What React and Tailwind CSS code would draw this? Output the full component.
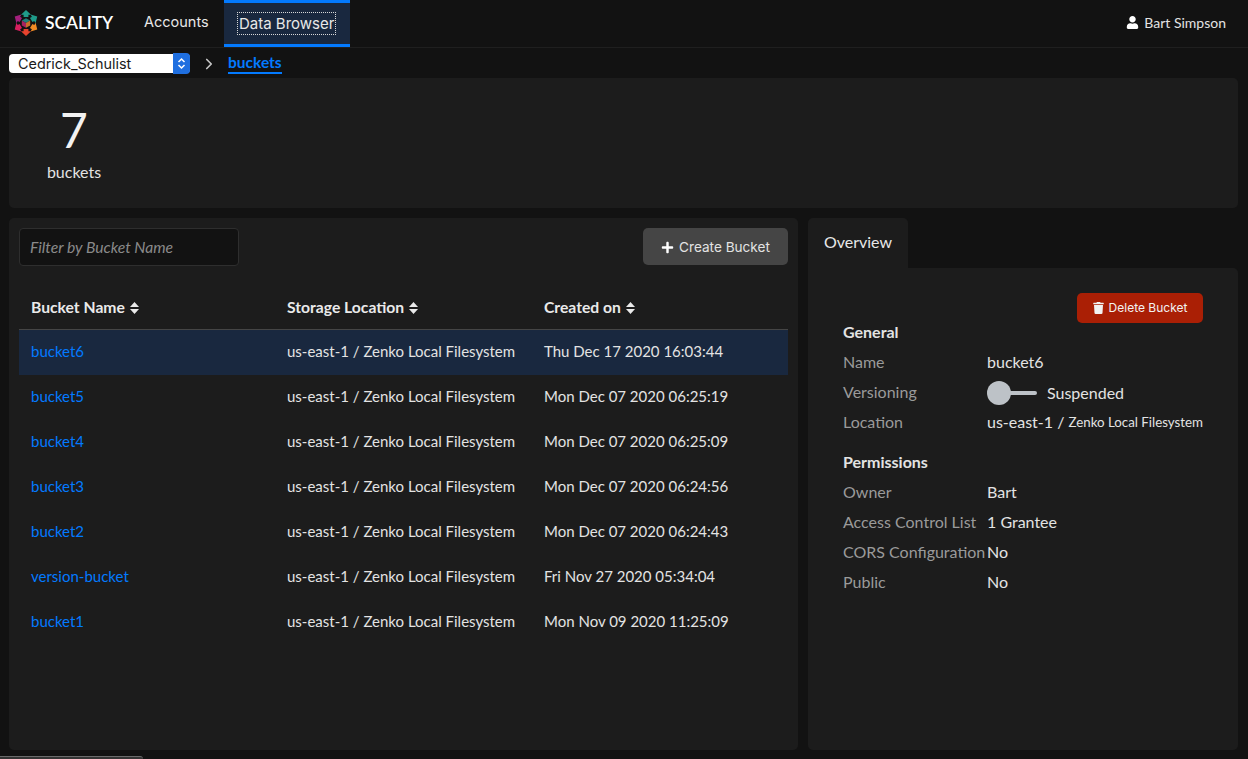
import { ChevronRight } from 'lucide-react'
import { FaPlus, FaTrash, FaUser } from 'react-icons/fa'

const BUCKETS = [
  { name: 'bucket6', created: 'Thu Dec 17 2020 16:03:44', selected: true },
  { name: 'bucket5', created: 'Mon Dec 07 2020 06:25:19' },
  { name: 'bucket4', created: 'Mon Dec 07 2020 06:25:09' },
  { name: 'bucket3', created: 'Mon Dec 07 2020 06:24:56' },
  { name: 'bucket2', created: 'Mon Dec 07 2020 06:24:43' },
  { name: 'version-bucket', created: 'Fri Nov 27 2020 05:34:04' },
  { name: 'bucket1', created: 'Mon Nov 09 2020 11:25:09' },
]

const ARROWS = [
  { angle: 0, color: '#1f9c8a' },
  { angle: 60, color: '#1f9c8a' },
  { angle: 120, color: '#f08a24' },
  { angle: 180, color: '#e8432e' },
  { angle: 240, color: '#d81f5f' },
  { angle: 300, color: '#a3207c' },
]

function Logo() {
  return (
    <svg width="26" height="26" viewBox="-13 -13 26 26" className="shrink-0">
      {ARROWS.map(a => (
        <g key={a.angle} transform={`rotate(${a.angle})`}>
          <path d="M0 -13 L5 -8.2 L2.4 -8.2 L2.4 -6 L-2.4 -6 L-2.4 -8.2 L-5 -8.2 Z" fill={a.color} />
        </g>
      ))}
      <path d="M0 -4.8 L4.2 -2.4 L0 0 L-4.2 -2.4 Z" fill="#1f7f78" />
      <path d="M4.2 -2.4 L4.2 2.4 L0 4.8 L0 0 Z" fill="#c9702a" />
      <path d="M-4.2 -2.4 L0 0 L0 4.8 L-4.2 2.4 Z" fill="#a8235f" />
    </svg>
  )
}

function SortHeader({ label }) {
  return (
    <div className="flex items-center gap-[5px] text-[15.7px] font-bold text-[#eaeaea]">
      {label}
      <svg width="9" height="12" viewBox="0 0 9 12" fill="currentColor" className="shrink-0">
        <path d="M4.5 0 L9 5 L0 5 Z" />
        <path d="M0 7 L9 7 L4.5 12 Z" />
      </svg>
    </div>
  )
}

function InfoRow({ label, children }) {
  return (
    <div className="flex h-[30px] items-center pb-[2px]">
      <div className="w-[144px] shrink-0 whitespace-nowrap text-[#9a9a9a]">{label}</div>
      <div className="flex items-center whitespace-nowrap text-[#e3e3e3]">{children}</div>
    </div>
  )
}

export default function App() {
  return (
    <div className="relative flex h-[759px] w-[1248px] flex-col overflow-hidden bg-[#121212] font-['Lato',sans-serif] text-[15px] text-[#eaeaea]">

      {/* Navbar */}
      <header className="flex h-[48px] shrink-0 items-stretch border-b border-[#1f1f1f] pl-[13px] pr-[22px]">
        <div className="flex w-[100px] items-center gap-[6px] pb-[1px]">
          <Logo />
          <span className="font-['Lato',sans-serif] text-[17.5px] font-semibold tracking-[-0.1px] text-white">SCALITY</span>
        </div>
        <div className="ml-[31px] flex items-center pb-[3px] font-['Inter',sans-serif] text-[14.5px] text-[#e8e8e8]">Accounts</div>
        <div className="ml-[15px] flex h-[47px] w-[126px] items-center justify-center border-y-[3px] border-[#037aff] bg-[#19283f] font-['Inter',sans-serif] text-[15px] text-[#e8e8e8]">
          <span className="border border-dotted border-[#d8d8d8] px-px leading-[21px]">Data Browser</span>
        </div>
        <div className="ml-auto flex items-center gap-[5px] pb-[2px] text-[14px] text-[#e3e3e3]">
          <FaUser className="h-[13px] w-[13px] text-white" />
          Bart Simpson
        </div>
      </header>

      {/* Breadcrumb */}
      <div className="flex h-[30px] shrink-0 items-center pl-[9px] pt-[1px]">
        <div className="flex h-[19px] w-[181px] items-center rounded-[4px] bg-white pl-[9px] font-['Inter',sans-serif] text-[14.4px] text-[#1a1a1a]">
          <span className="flex-1">Cedrick_Schulist</span>
          <span className="flex h-[21px] w-[17px] flex-col items-center justify-center rounded-r-[4px] bg-[#1f6fe0] text-white">
            <svg width="9" height="13" viewBox="0 0 9 13" fill="none" stroke="currentColor" strokeWidth="1.5">
              <path d="M1.5 5 L4.5 2 L7.5 5" />
              <path d="M1.5 8 L4.5 11 L7.5 8" />
            </svg>
          </span>
        </div>
        <ChevronRight className="ml-[10px] h-[18px] w-[18px] text-[#c8c8c8]" strokeWidth={2.2} />
        <span className="ml-[10px] mb-[1px] border-b-2 border-[#037aff] text-[15.5px] font-bold leading-[20px] text-[#037aff]">buckets</span>
      </div>

      {/* Summary */}
      <section className="ml-[9px] mr-[10px] flex h-[130px] shrink-0 flex-col rounded-[5px] bg-[#1c1c1c] pl-[38px]">
        <div className="w-[54px] pt-[22px] text-center">
          <div className="flex justify-center text-[48px] font-normal leading-[60px] text-[#f2f2f2]">7</div>
          <div className="mt-[2px] -mx-2 text-center text-[16px] leading-[20px] text-[#e3e3e3]">buckets</div>
        </div>
      </section>

      <div className="ml-[9px] mr-[10px] mt-[10px] flex h-[532px] shrink-0 gap-[10px]">

        {/* Bucket list */}
        <section className="flex w-[789px] shrink-0 flex-col rounded-[5px] bg-[#1c1c1c] px-[10px] pt-[10px]">
          <div className="flex items-start justify-between">
            <div className="flex h-[38px] w-[220px] items-center rounded-[4px] border border-[#2e2e2e] bg-[#121212] pl-[10px] pt-px text-[15.7px] italic text-[#8a8a8a]">
              Filter by Bucket Name
            </div>
            <button className="flex h-[37px] w-[145px] items-center justify-center gap-[5px] rounded-[5px] bg-[#454545] pt-px font-['Inter',sans-serif] text-[13.6px] text-[#e3e3e3]">
              <FaPlus className="h-[13px] w-[13px] text-white" />
              Create Bucket
            </button>
          </div>

          <div className="mt-[19px] flex h-[45px] items-center border-b border-[#454545] pt-[2px]">
            <div className="w-[256px] pl-[12px]"><SortHeader label="Bucket Name" /></div>
            <div className="w-[257px] pl-[12px]"><SortHeader label="Storage Location" /></div>
            <div className="pl-[12px]"><SortHeader label="Created on" /></div>
          </div>

          {BUCKETS.map(b => (
            <div key={b.name} className={`flex h-[45px] items-center pb-[2px] ${b.selected ? 'bg-[#19283f]' : ''}`}>
              <div className="w-[256px] pl-[12px] text-[#037aff]">{b.name}</div>
              <div className="w-[257px] pl-[12px] text-[#e3e3e3]">us-east-1 / Zenko Local Filesystem</div>
              <div className="pl-[12px] text-[#e3e3e3]">{b.created}</div>
            </div>
          ))}
        </section>

        {/* Details */}
        <section className="flex min-w-0 flex-1 flex-col text-[16px]">
          <div className="flex h-[50px] w-[100px] shrink-0 items-center justify-center rounded-t-[5px] bg-[#1c1c1c] pb-[2px] text-[#e8e8e8]">Overview</div>
          <div className="flex-1 rounded-b-[5px] rounded-tr-[5px] bg-[#1c1c1c] pl-[35px] pr-[35px] pt-[25px]">
            <div className="flex justify-end">
              <button className="flex h-[30px] w-[126px] items-center justify-center gap-[5px] rounded-[5px] bg-[#aa1f05] font-['Inter',sans-serif] text-[12px] text-[#f2f2f2]">
                <FaTrash className="h-[12px] w-[11px]" />
                Delete Bucket
              </button>
            </div>

            <h3 className="mt-[-5px] flex h-[30px] items-center pb-[2px] font-bold text-[#e3e3e3]">General</h3>
            <InfoRow label="Name">bucket6</InfoRow>
            <InfoRow label="Versioning">
              <span className="flex items-center pt-[2px]">
                <span className="h-[24px] w-[24px] rounded-full bg-[#bdc2c7]" />
                <span className="-ml-px h-[4px] w-[27px] rounded-r-full bg-[#bdc2c7]" />
                <span className="ml-[10px]">Suspended</span>
              </span>
            </InfoRow>
            <InfoRow label="Location">
              us-east-1&nbsp;/&nbsp;<span className="pt-px text-[13.3px]">Zenko Local Filesystem</span>
            </InfoRow>

            <h3 className="mt-[10px] flex h-[30px] items-center pb-[2px] font-bold text-[#e3e3e3]">Permissions</h3>
            <InfoRow label="Owner">Bart</InfoRow>
            <InfoRow label="Access Control List">1 Grantee</InfoRow>
            <InfoRow label="CORS Configuration">No</InfoRow>
            <InfoRow label="Public">No</InfoRow>
          </div>
        </section>
      </div>

      {/* Scrollbar sliver at the bottom edge */}
      <div className="absolute bottom-0 left-0 h-[3px] w-[143px] rounded-tr-[3px] border-t border-[#6a6a6a] bg-[#333333]" />
    </div>
  )
}
